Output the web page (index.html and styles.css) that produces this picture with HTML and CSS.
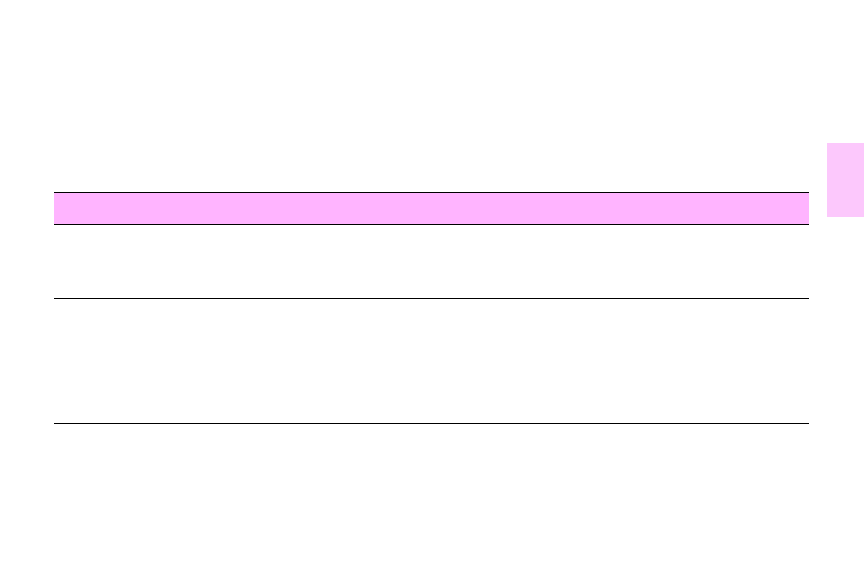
FILE: index.html
```html
<!DOCTYPE html>
<html>
<head>
<meta charset="utf-8">
<link rel="stylesheet" href="styles.css">
</head>
<body>
<div class="page">
  <div class="table">
    <div class="row head"></div>
    <div class="row r1"></div>
    <div class="row r2"></div>
  </div>
</div>
<div class="thumb-tab"></div>
</body>
</html>
```
FILE: styles.css
```css
html, body {
  margin: 0;
  padding: 0;
  background: #ffffff;
  font-family: "Liberation Sans", Arial, sans-serif;
}
.page {
  width: 864px;
  height: 576px;
  padding: 192px 0 0 54px;
  box-sizing: border-box;
}
.table {
  width: 755px;
  display: flex;
  flex-direction: column;
  border-top: 1px solid #000;
}
.row {
  border-bottom: 1px solid #000;
}
.head {
  height: 31px;
  background: #ffb4ff;
}
.r1 {
  height: 73px;
}
.r2 {
  height: 124px;
}
.thumb-tab {
  position: absolute;
  left: 827px;
  top: 143px;
  width: 37px;
  height: 74px;
  background: #fcc8fc;
}
```
